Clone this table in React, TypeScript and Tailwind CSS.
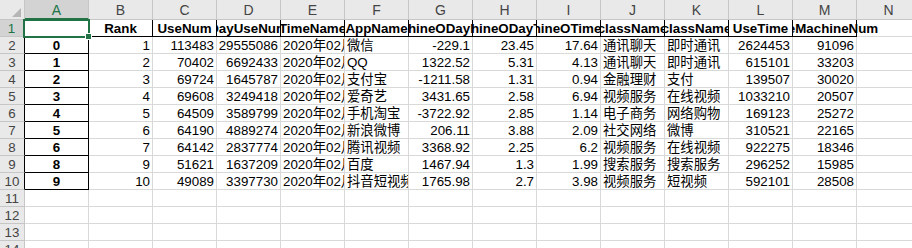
import React from "react";

const COLS = ["A", "B", "C", "D", "E", "F", "G", "H", "I", "J", "K", "L", "M", "N"];

// header row (row 1) of the sheet, columns B..M
const HEAD = [
  "Rank",
  "UseNum",
  "DayUseNum",
  "TimeName",
  "AppName",
  "MachineODayRate",
  "MachineODayTime",
  "MachineOTimeRate",
  "className",
  "className",
  "UseTime",
];

const ROWS: [number, number, number, number, string, string, number, number, number, string, string, number, number][] = [
  [0, 1, 113483, 29555086, "2020年02月", "微信", -229.1, 23.45, 17.64, "通讯聊天", "即时通讯", 2624453, 91096],
  [1, 2, 70402, 6692433, "2020年02月", "QQ", 1322.52, 5.31, 4.13, "通讯聊天", "即时通讯", 615101, 33203],
  [2, 3, 69724, 1645787, "2020年02月", "支付宝", -1211.58, 1.31, 0.94, "金融理财", "支付", 139507, 30020],
  [3, 4, 69608, 3249418, "2020年02月", "爱奇艺", 3431.65, 2.58, 6.94, "视频服务", "在线视频", 1033210, 20507],
  [4, 5, 64509, 3589799, "2020年02月", "手机淘宝", -3722.92, 2.85, 1.14, "电子商务", "网络购物", 169123, 25272],
  [5, 6, 64190, 4889274, "2020年02月", "新浪微博", 206.11, 3.88, 2.09, "社交网络", "微博", 310521, 22165],
  [6, 7, 64142, 2837774, "2020年02月", "腾讯视频", 3368.92, 2.25, 6.2, "视频服务", "在线视频", 922275, 18346],
  [8, 9, 51621, 1637209, "2020年02月", "百度", 1467.94, 1.3, 1.99, "搜索服务", "搜索服务", 296252, 15985],
  [9, 10, 49089, 3397730, "2020年02月", "抖音短视频", 1765.98, 2.7, 3.98, "视频服务", "短视频", 592101, 28508],
];

function RowHead({ n, dark }: { n: number; dark?: boolean }) {
  if (n === 1) {
    return (
      <div className="flex items-end justify-center border-b border-r-2 border-b-[#c6c6c6] border-r-[#217346] bg-[#d3d3d3] leading-[14px] text-[#217346]">
        {n}
      </div>
    );
  }
  return (
    <div
      className={`flex items-end justify-center border-b border-r border-b-[#c6c6c6] bg-[#e9e9e9] leading-[14px] text-[#444] ${
        dark ? "border-r-black" : "border-r-[#c6c6c6]"
      }`}
    >
      {n}
    </div>
  );
}

function Cell({ v, right }: { v: string | number | null; right?: boolean }) {
  return (
    <div
      className={`flex items-end overflow-hidden whitespace-nowrap border-b border-r border-[#d9d9d9] leading-[14px] ${
        right ? "justify-end pr-[2px]" : "justify-start pl-[2px]"
      }`}
    >
      {v}
    </div>
  );
}

export default function App() {
  return (
    <div className="h-[248px] w-[912px] overflow-hidden bg-white font-['Liberation_Sans','Noto_Sans_CJK_SC',sans-serif] text-[13.33px] text-black">
      <div className="grid grid-cols-[25px_repeat(14,64px)] grid-rows-[20px_repeat(14,17px)]">
        {/* corner */}
        <div className="flex items-end justify-end border-b border-r border-[#c6c6c6] bg-[#e9e9e9] pb-[2px] pr-[3px]">
          <svg width="9" height="9" viewBox="0 0 9 9">
            <polygon points="9,0 9,9 0,9" fill="#b6b6b6" />
          </svg>
        </div>

        {/* column letters */}
        {COLS.map((c) =>
          c === "A" ? (
            <div
              key={c}
              className="flex items-end justify-center border-b-2 border-r border-b-[#217346] border-r-[#c6c6c6] bg-[#d3d3d3] pb-[1px] leading-[14px] text-[14px] text-[#217346]"
            >
              {c}
            </div>
          ) : (
            <div
              key={c}
              className="flex items-end justify-center border-b border-r border-[#c6c6c6] bg-[#e9e9e9] pb-[2px] leading-[14px] text-[14px] text-[#444]"
            >
              {c}
            </div>
          )
        )}

        {/* row 1 */}
        <RowHead n={1} />
        <div className="relative border-b border-r border-[#d9d9d9]">
          <div className="absolute -bottom-[2px] -left-[2px] -right-[2px] -top-[1px] z-10 border-2 border-[#217346]" />
          <div className="absolute -bottom-[4px] -right-[4px] z-20 h-[7px] w-[7px] border border-white bg-[#217346]" />
        </div>
        {HEAD.map((h, i) => (
          <div
            key={i}
            className="flex items-end justify-center overflow-hidden whitespace-nowrap border-b border-r border-black font-bold leading-[14px]"
          >
            <span className="shrink-0">{h}</span>
          </div>
        ))}
        <div className="relative border-b border-r border-black font-bold leading-[14px]">
          <div className="absolute bottom-0 left-0 top-0 z-10 w-[127px] overflow-hidden">
            <div className="flex h-full w-[63px] items-end justify-center whitespace-nowrap">
              <span className="shrink-0">UseMachineNum</span>
            </div>
          </div>
        </div>
        <Cell v={null} />

        {/* data rows 2..10 */}
        {ROWS.map((r, ri) => (
          <React.Fragment key={ri}>
            <RowHead n={ri + 2} dark />
            <div className="flex items-end justify-center border-b border-r border-black font-bold leading-[14px]">
              {r[0]}
            </div>
            <Cell v={r[1]} right />
            <Cell v={r[2]} right />
            <Cell v={r[3]} right />
            <Cell v={r[4]} />
            <Cell v={r[5]} />
            <Cell v={r[6]} right />
            <Cell v={r[7]} right />
            <Cell v={r[8]} right />
            <Cell v={r[9]} />
            <Cell v={r[10]} />
            <Cell v={r[11]} right />
            <Cell v={r[12]} right />
            <Cell v={null} />
          </React.Fragment>
        ))}

        {/* empty rows 11..14 */}
        {[11, 12, 13, 14].map((n) => (
          <React.Fragment key={n}>
            <RowHead n={n} />
            {COLS.map((c) => (
              <Cell key={c} v={null} />
            ))}
          </React.Fragment>
        ))}
      </div>
    </div>
  );
}
